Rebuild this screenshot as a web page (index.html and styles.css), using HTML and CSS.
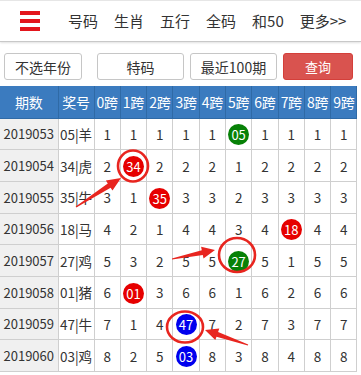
FILE: index.html
```html
<!DOCTYPE html>
<html lang="zh">
<head>
<meta charset="utf-8">
<link rel="stylesheet" href="styles.css">
</head>
<body>
<div class="page">
  <header class="nav">
    <div class="menu"><span></span><span></span><span></span></div>
    <nav class="links">
      <a>号码</a><a>生肖</a><a>五行</a><a>全码</a><a>和50</a><a>更多&gt;&gt;</a>
    </nav>
  </header>
  <div class="filters">
    <button class="btn b1">不选年份</button>
    <button class="btn b2">特码</button>
    <button class="btn b3">最近100期</button>
    <button class="btn query">查询</button>
  </div>
  <table class="grid">
    <colgroup><col class="c-qi"><col class="c-hao"><col span="10" class="c-k"></colgroup>
    <thead>
      <tr><th>期数</th><th>奖号</th><th>0跨</th><th>1跨</th><th>2跨</th><th>3跨</th><th>4跨</th><th>5跨</th><th>6跨</th><th>7跨</th><th>8跨</th><th>9跨</th></tr>
    </thead>
    <tbody>
      <tr><td class="qi">2019053</td><td>05|羊</td><td>1</td><td>1</td><td>1</td><td>1</td><td>1</td><td><span class="ball green">05</span></td><td>1</td><td>1</td><td>1</td><td>1</td></tr>
      <tr><td class="qi">2019054</td><td>34|虎</td><td>2</td><td><span class="ball red">34</span></td><td>2</td><td>2</td><td>2</td><td>1</td><td>2</td><td>2</td><td>2</td><td>2</td></tr>
      <tr><td class="qi">2019055</td><td>35|牛</td><td>3</td><td>1</td><td><span class="ball red">35</span></td><td>3</td><td>3</td><td>2</td><td>3</td><td>3</td><td>3</td><td>3</td></tr>
      <tr><td class="qi">2019056</td><td>18|马</td><td>4</td><td>2</td><td>1</td><td>4</td><td>4</td><td>3</td><td>4</td><td><span class="ball red">18</span></td><td>4</td><td>4</td></tr>
      <tr><td class="qi">2019057</td><td>27|鸡</td><td>5</td><td>3</td><td>2</td><td>5</td><td>5</td><td><span class="ball green">27</span></td><td>5</td><td>1</td><td>5</td><td>5</td></tr>
      <tr><td class="qi">2019058</td><td>01|猪</td><td>6</td><td><span class="ball red">01</span></td><td>3</td><td>6</td><td>6</td><td>1</td><td>6</td><td>2</td><td>6</td><td>6</td></tr>
      <tr><td class="qi">2019059</td><td>47|牛</td><td>7</td><td>1</td><td>4</td><td><span class="ball blue">47</span></td><td>7</td><td>2</td><td>7</td><td>3</td><td>7</td><td>7</td></tr>
      <tr><td class="qi">2019060</td><td>03|鸡</td><td>8</td><td>2</td><td>5</td><td><span class="ball blue">03</span></td><td>8</td><td>3</td><td>8</td><td>4</td><td>8</td><td>8</td></tr>
    </tbody>
  </table>
  <svg class="marks" width="361" height="375" viewBox="0 0 361 375">
    <g fill="none" stroke="#e8251f" stroke-width="2.6">
      <ellipse cx="133" cy="166" rx="15" ry="15.5"/>
      <ellipse cx="237" cy="255" rx="18" ry="17"/>
      <ellipse cx="185" cy="327" rx="18" ry="15.5"/>
    </g>
    <g fill="#e8251f">
      <polygon points="76.3,207.4 110.6,187.7 112.5,190.6 121,178 105.9,180.6 107.8,183.5 75.7,206.6"/>
      <polygon points="172.1,259.5 202.8,255.1 203.5,258.6 215,250 201.1,246.8 201.8,250.3 171.9,258.5"/>
      <polygon points="248.2,344.5 218.1,331.9 219.3,328.6 205,330 215.3,340 216.5,336.7 247.8,345.5"/>
    </g>
  </svg>
</div>
</body>
</html>
```
FILE: styles.css
```css
* { box-sizing: border-box; }
body {
  margin: 0;
  background: #fff;
  font-family: "Noto Sans CJK SC", "Noto Sans", sans-serif;
  color: #333;
}
.page {
  position: relative;
  width: 361px;
  height: 375px;
  overflow: hidden;
}
.nav {
  height: 42px;
  display: flex;
  align-items: center;
  border-top: 1px solid #e6e6e6;
  border-bottom: 1px solid #c8c8c8;
  box-shadow: 0 1px 2px rgba(0,0,0,0.12);
  padding-left: 20px;
}
.menu {
  width: 20px;
  height: 20px;
  display: flex;
  flex-direction: column;
  justify-content: space-between;
}
.menu span {
  display: block;
  height: 4px;
  background: #e3161d;
}
.links {
  display: flex;
  margin-left: 28px;
  gap: 16px;
}
.links a {
  font-size: 15px;
  color: #333;
  line-height: 20px;
  white-space: nowrap;
}
.filters {
  display: flex;
  padding: 11px 0 0 4px;
  height: 44px;
}
.btn {
  height: 27px;
  border: 1px solid #c6c6c6;
  border-radius: 3px;
  background: #fff;
  font-family: "Noto Sans CJK SC", "Noto Sans", sans-serif;
  font-size: 14px;
  color: #333;
  padding: 0;
}
.b1 { width: 78px; }
.b2 { width: 87px; margin-left: 15px; }
.b3 { width: 87px; margin-left: 6px; }
.query {
  width: 70px;
  margin-left: 6px;
  background: #d9534f;
  border-color: #d43f3a;
  color: #fff;
  font-size: 13px;
}
.grid {
  border-collapse: collapse;
  table-layout: fixed;
  width: 357px;
}
.c-qi { width: 58px; }
.c-hao { width: 36px; }
.c-k { width: 26.3px; }
.grid th {
  background: #3b7bbf;
  color: #fff;
  font-weight: normal;
  font-size: 14px;
  height: 32px;
  padding: 0;
  border: 1px solid #2f6aa6;
  border-top: 0;
  white-space: nowrap;
  letter-spacing: -0.3px;
}
.grid td {
  height: 31.7px;
  padding: 0;
  text-align: center;
  font-size: 13.5px;
  border: 1px solid #cfcfcf;
  white-space: nowrap;
  color: #333;
}
.grid td.qi {
  background: #f0f0f0;
  font-size: 13px;
}
.grid tr td:first-child, .grid tr th:first-child { border-left: 0; }
.ball {
  display: inline-block;
  width: 21px;
  height: 21px;
  border-radius: 50%;
  line-height: 21px;
  color: #fff;
  font-size: 13px;
  vertical-align: middle;
}
.red { background: #e60000; }
.green { background: #078107; }
.blue { background: #0000ee; }
.marks {
  position: absolute;
  left: 0;
  top: 0;
  pointer-events: none;
}
```
